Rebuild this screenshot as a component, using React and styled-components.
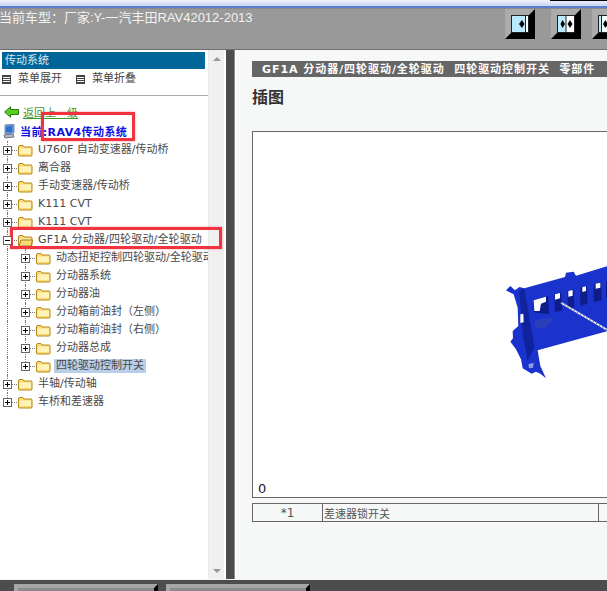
import React from 'react';
import styled, { createGlobalStyle } from 'styled-components';

const Global = createGlobalStyle`
  html, body { margin: 0; padding: 0; height: 100%; overflow: hidden; background: #4d4d4d; }
  #root { height: 591px; width: 607px; overflow: hidden; }
`;

const FONT = `"DejaVu Sans", "Noto Sans CJK SC", sans-serif`;

const Page = styled.div`
  width: 607px;
  height: 591px;
  display: flex;
  flex-direction: column;
  overflow: hidden;
  position: relative;
  font-family: ${FONT};
`;

const WindowEdge = styled.div`
  height: 9px;
  flex: none;
  display: flex;
  justify-content: flex-end;
  background: linear-gradient(#eef1fb 0, #c9d4f1 6px, #5b7fcb 6px, #5b7fcb 8px, #8b8b8b 8px);
`;

const EdgeMark = styled.div`
  width: 57px;
  height: 1px;
  background: #000;
`;

const TopBar = styled.header`
  height: 40px;
  flex: none;
  display: flex;
  background: #999;
  border-bottom: 1px solid #6f6f6f;
  overflow: hidden;
`;

const CarTitle = styled.div`
  flex: none;
  width: 506px;
  margin-left: -1px;
  font: 13px/18px "Liberation Sans", "Noto Sans CJK SC", sans-serif;
  color: #f2f2f2;
  white-space: nowrap;
`;

const ToolButton = styled.div`
  width: 18px;
  height: 18px;
  flex: none;
  margin-left: ${p => p.$gap}px;
  border: 6px solid;
  border-color: #ababab #000 #000 #ababab;
  display: flex;
`;

const ButtonGlyph = styled.svg`
  width: 18px;
  height: 18px;
  display: block;
`;

const Main = styled.div`
  flex: 1;
  min-height: 0;
  display: flex;
  background: #fff;
  border-bottom: 1px solid #f4f4f4;
`;

const SidePane = styled.aside`
  width: 226px;
  flex: none;
  display: flex;
  background: #fff;
`;

const SideContent = styled.div`
  width: 208px;
  flex: none;
  overflow: hidden;
  padding-top: 2px;
  box-sizing: border-box;
`;

const PanelHead = styled.div`
  height: 17px;
  margin: 0 3px 0 2px;
  padding-left: 3px;
  background: #006699;
  color: #d9e8f0;
  font-size: 11px;
  line-height: 17px;
`;

const MenuRow = styled.div`
  height: 26px;
  padding: 2px 0 0 2px;
  box-sizing: border-box;
  display: flex;
  align-items: flex-start;
  gap: 14px;
`;

const MenuItem = styled.div`
  display: flex;
  align-items: center;
  gap: 7px;
  font-size: 11px;
  line-height: 16px;
  color: #444;
`;

const MenuBox = styled.span`
  width: 7px;
  height: 7px;
  border: 1px solid #444;
  background: repeating-linear-gradient(#444 0 1px, #fff 1px 2px);
`;

const Rule = styled.div`
  height: 1px;
  background: #aaa;
`;

const BackRow = styled.div`
  display: flex;
  align-items: center;
  gap: 4px;
  margin: 8px 0 0 4px;
  height: 16px;
`;

const BackLink = styled.a`
  font-size: 11px;
  color: #3c9a2c;
  text-decoration: underline;
`;

const CurrentRow = styled.div`
  display: flex;
  align-items: center;
  gap: 5px;
  margin: 2px 0 0 3px;
  height: 18px;
`;

const CurrentText = styled.span`
  font-size: 11px;
  font-weight: bold;
  letter-spacing: 0.4px;
  color: #1010e0;
  white-space: nowrap;
`;

const Tree = styled.ul`
  list-style: none;
  margin: 1px 0 0;
  padding: 0;
`;

const Row = styled.li`
  height: 18px;
  display: flex;
  align-items: center;
  padding-left: ${p => (p.$nested ? 21 : 3)}px;
  position: relative;
  white-space: nowrap;
  font-size: 11px;
  color: #4a4a4a;
  &::before {
    content: '';
    position: absolute;
    top: 0;
    bottom: ${p => (p.$last ? 9 : 0)}px;
    left: 7px;
    border-left: 1px dotted #777;
  }
  &::after {
    content: ${p => (p.$nested ? "''" : 'none')};
    position: absolute;
    top: 0;
    bottom: ${p => (p.$lastChild ? 9 : 0)}px;
    left: 25px;
    border-left: 1px dotted #777;
  }
`;

const Expander = styled.span`
  width: 7px;
  height: 7px;
  flex: none;
  border: 1px solid #666;
  background:
    linear-gradient(#000, #000) center / 5px 1px no-repeat,
    ${p => (p.$open ? 'none' : 'linear-gradient(#000, #000) center / 1px 5px no-repeat')},
    #fff;
  position: relative;
  z-index: 1;
`;

const Connector = styled.span`
  width: 5px;
  flex: none;
  margin-right: 1px;
  border-top: 1px dotted #777;
`;

const FolderGlyph = styled.svg`
  width: 15px;
  height: 13px;
  flex: none;
  margin-right: 5px;
`;

const Label = styled.span`
  padding: 0 ${p => (p.$selected ? '2px' : 0)};
  margin-left: ${p => (p.$selected ? '-2px' : 0)};
  line-height: 14px;
  letter-spacing: ${p => (p.$wide ? '0.15px' : 0)};
  background: ${p => (p.$selected ? '#b9cfe9' : 'transparent')};
`;

const Scrollbar = styled.div`
  width: 16px;
  flex: none;
  margin-right: 2px;
  background: #f0f0f0;
  border-left: 1px solid #e8e8e8;
  box-sizing: border-box;
  display: flex;
  flex-direction: column;
  justify-content: space-between;
  align-items: center;
  padding: 7px 0 6px;
`;

const Arrow = styled.span`
  width: 0;
  height: 0;
  border-left: 4px solid transparent;
  border-right: 4px solid transparent;
  ${p => (p.$down ? 'border-top: 4px solid #999;' : 'border-bottom: 4px solid #999;')}
`;

const Divider = styled.div`
  width: 8px;
  flex: none;
  background: #4d4d4d;
  border-right: 1px solid #8a8a8a;
`;

const Content = styled.main`
  flex: 1;
  min-width: 0;
  background: #f5f8f7;
  border-left: 1px solid #fff;
  padding: 11px 0 0 16px;
  overflow: hidden;
`;

const PartHead = styled.div`
  height: 16px;
  background: #666;
  padding-left: 10px;
  color: #fff;
  font-size: 11px;
  font-weight: bold;
  line-height: 17px;
  letter-spacing: 0.95px;
  white-space: pre;
  overflow: hidden;
`;

const SectionTitle = styled.h2`
  margin: 11px 0 0 0;
  font-size: 16px;
  line-height: 20px;
  font-weight: bold;
  color: #333;
`;

const Figure = styled.div`
  margin-top: 23px;
  height: 367px;
  width: 372px;
  box-sizing: border-box;
  background: #fff;
  border: 1px solid #666;
  display: flex;
  flex-direction: column;
  overflow: hidden;
`;

const Drawing = styled.svg`
  width: 117px;
  height: 140px;
  flex: none;
  margin: 119px 0 0 238px;
`;

const FigureNumber = styled.div`
  margin: auto 0 1px 5px;
  font-size: 13px;
  line-height: 15px;
  color: #222;
`;

const LegendTable = styled.table`
  margin-top: 5px;
  width: 372px;
  table-layout: fixed;
  border-collapse: collapse;
  font-size: 11px;
  color: #555;
`;

const LegendCell = styled.td`
  height: 17px;
  padding: 0 ${p => (p.$center ? 0 : 1)}px;
  border: 1px solid #666;
  text-align: ${p => (p.$center ? 'center' : 'left')};
  font-size: ${p => (p.$center ? 12 : 11)}px;
  width: ${p => p.$width}px;
`;

const Footer = styled.footer`
  height: 11px;
  flex: none;
  display: flex;
  align-items: flex-end;
  gap: 8px;
  padding-left: 14px;
  background: #4d4d4d;
`;

const FooterTab = styled.div`
  width: ${p => p.$width}px;
  height: 3px;
  border: 4px solid;
  border-bottom: 0;
  border-color: #a6a6a6 #000 transparent #a6a6a6;
  background: #8a8a8a;
`;

const Highlight = styled.div`
  position: absolute;
  left: ${p => p.$x}px;
  top: ${p => p.$y}px;
  width: ${p => p.$w}px;
  height: ${p => p.$h}px;
  border: 3px solid #f0333f;
  box-sizing: border-box;
  box-shadow: 0 0 2px rgba(240, 80, 90, 0.6);
`;

const Folder = ({ open }) => (
  <FolderGlyph viewBox="0 0 15 13">
    <path d="M.5 3 Q.5 1.5 2 1.5 L5 1.5 L6 3 L13 3 Q14 3 14 4 L14 11 Q14 12 13 12 L1.5 12 Q.5 12 .5 11 Z" fill="#fbdc74" stroke="#b8871a" />
    <path d="M1.5 4.5 L13 4.5 L13 10 L1.5 10 Z" fill="#fff3b8" />
    {open && <path d="M1 12 L3 6 L14.5 6 L13 12 Z" fill="#fcdc78" stroke="#a07a14" />}
  </FolderGlyph>
);

const TREE_TOP = [
  'U760F 自动变速器/传动桥',
  '离合器',
  '手动变速器/传动桥',
  'K111 CVT',
  'K111 CVT',
];

const CHILDREN = [
  '动态扭矩控制四轮驱动/全轮驱动系统',
  '分动器系统',
  '分动器油',
  '分动箱前油封（左侧）',
  '分动箱前油封（右侧）',
  '分动器总成',
  '四轮驱动控制开关',
];

const TreeRow = ({ label, open, nested, selected, last, lastChild, wide }) => (
  <Row $nested={nested} $last={last} $lastChild={lastChild}>
    <Expander $open={open} />
    <Connector />
    <Folder open={open} />
    <Label $selected={selected} $wide={wide}>{label}</Label>
  </Row>
);

export default function App() {
  return (
    <Page>
      <Global />
      <WindowEdge><EdgeMark /></WindowEdge>
      <TopBar>
        <CarTitle>当前车型：厂家:Y-一汽丰田RAV42012-2013</CarTitle>
        <ToolButton $gap={0}>
          <ButtonGlyph viewBox="0 0 18 18">
            <rect x=".5" y=".5" width="17" height="17" fill="#b9ebff" stroke="#222" />
            <rect x="15" y="1" width="2" height="16" fill="#fff" />
            <path d="M14.5 1V17" stroke="#222" />
            <path d="M8 9 L11 5 L13.5 9 L11 13 Z" fill="#000" />
          </ButtonGlyph>
        </ToolButton>
        <ToolButton $gap={16}>
          <ButtonGlyph viewBox="0 0 18 18">
            <rect x=".5" y=".5" width="17" height="17" fill="#fff" stroke="#222" />
            <rect x="1" y="1" width="8" height="16" fill="#b9ebff" />
            <path d="M9 1V17" stroke="#222" />
            <path d="M3.5 9 L5.5 5 L8 9 L5.5 13 Z M15.5 9 L13 5 L10.5 9 L13 13 Z" fill="#000" />
          </ButtonGlyph>
        </ToolButton>
        <ToolButton $gap={11}>
          <ButtonGlyph viewBox="0 0 18 18">
            <rect x=".5" y=".5" width="17" height="17" fill="#fff" stroke="#222" />
            <rect x="1" y="1" width="2" height="16" fill="#b9ebff" />
            <path d="M3.5 1V17" stroke="#222" />
            <path d="M5 9 L7.5 5 L10 9 L7.5 13 Z" fill="#000" />
          </ButtonGlyph>
        </ToolButton>
      </TopBar>
      <Main>
        <SidePane>
          <SideContent>
            <PanelHead>传动系统</PanelHead>
            <MenuRow>
              <MenuItem><MenuBox />菜单展开</MenuItem>
              <MenuItem><MenuBox />菜单折叠</MenuItem>
            </MenuRow>
            <Rule />
            <BackRow>
              <svg width="15" height="12" viewBox="0 0 15 12">
                <path d="M.5 6 L6.5 .8 L6.5 3.5 L14.5 3.5 L14.5 8.5 L6.5 8.5 L6.5 11.2 Z" fill="#55d020" stroke="#2a7a10" />
              </svg>
              <BackLink>返回上一级</BackLink>
            </BackRow>
            <CurrentRow>
              <svg width="12" height="15" viewBox="0 0 12 15">
                <path d="M2 1 L11 0 L11 9 L2 10 Z" fill="#5c8fd8" stroke="#7a95b5" />
                <path d="M3 3 L9 2 L9 8 L3 8 Z" fill="#2e6fd0" />
                <path d="M1 11 L10 10 L11 13 L2 14 Z" fill="#b4bcc8" stroke="#6b7585" />
              </svg>
              <CurrentText>当前:RAV4传动系统</CurrentText>
            </CurrentRow>
            <Tree>
              {TREE_TOP.map((label, i) => <TreeRow key={i} label={label} />)}
              <TreeRow open wide label="GF1A 分动器/四轮驱动/全轮驱动" />
              {CHILDREN.map((label, i) => (
                <TreeRow
                  key={label}
                  nested
                  label={label}
                  lastChild={i === CHILDREN.length - 1}
                  selected={i === CHILDREN.length - 1}
                />
              ))}
              <TreeRow label="半轴/传动轴" />
              <TreeRow last label="车桥和差速器" />
            </Tree>
          </SideContent>
          <Scrollbar>
            <Arrow />
            <Arrow $down />
          </Scrollbar>
        </SidePane>
        <Divider />
        <Content>
          <PartHead>GF1A 分动器/四轮驱动/全轮驱动  四轮驱动控制开关  零部件</PartHead>
          <SectionTitle>插图</SectionTitle>
          <Figure>
            <Drawing viewBox="0 0 351 420">
              <path
                fill="#1a33cc"
                d="M45 118 L58 105 L72 118 L85 108 L100 112 L222 78 L225 65 L248 62 L255 74 L351 45 L351 240 L140 298 L148 345 L165 382 L148 368 L135 362 L122 368 L95 352 L90 325 L75 295 L58 272 L66 262 L65 240 L82 225 L80 170 L68 130 Z"
              />
              <path fill="#10229c" d="M85 118 L100 114 L118 215 L130 290 L110 330 L95 250 Z" />
              <path
                fill="#0e1d8a"
                d="M128 148 L172 135 L174 190 L128 184 Z M190 130 L210 124 L214 178 L192 184 Z M230 120 L248 115 L250 168 L230 174 Z M268 110 L288 105 L290 158 L268 164 Z M308 99 L330 93 L332 148 L308 154 Z M345 90 L351 88 L351 140 L345 142 Z"
              />
              <path
                fill="#fff"
                d="M128 148 L165 137 L165 152 L150 158 L146 180 L130 180 Z M192 130 L207 126 L207 142 L192 146 Z M232 120 L245 117 L245 134 L232 137 Z M274 109 L285 106 L285 120 L274 123 Z M314 98 L328 95 L328 110 L314 113 Z M88 190 L97 188 L98 214 L88 216 Z"
              />
              <path d="M130 212 C150 198 170 204 186 202 C172 236 146 236 132 228 Z" fill="#2a3fb8" />
              <path d="M112 340 L128 335 L126 350 L114 352 Z" fill="#8e9be6" />
              <path d="M210 155 L351 238" stroke="#fff" strokeWidth="5" />
              <path d="M210 155 L351 238" stroke="#222" strokeWidth="2" strokeDasharray="5 6" />
            </Drawing>
            <FigureNumber>0</FigureNumber>
          </Figure>
          <LegendTable>
            <tbody>
              <tr>
                <LegendCell $center $width={69}>*1</LegendCell>
                <LegendCell $width={273}>差速器锁开关</LegendCell>
                <LegendCell />
              </tr>
            </tbody>
          </LegendTable>
        </Content>
      </Main>
      <Footer>
        <FooterTab $width={136} />
        <FooterTab $width={136} />
      </Footer>
      <Highlight $x={41} $y={112} $w={94} $h={29} />
      <Highlight $x={10} $y={227} $w={212} $h={22} />
    </Page>
  );
}
